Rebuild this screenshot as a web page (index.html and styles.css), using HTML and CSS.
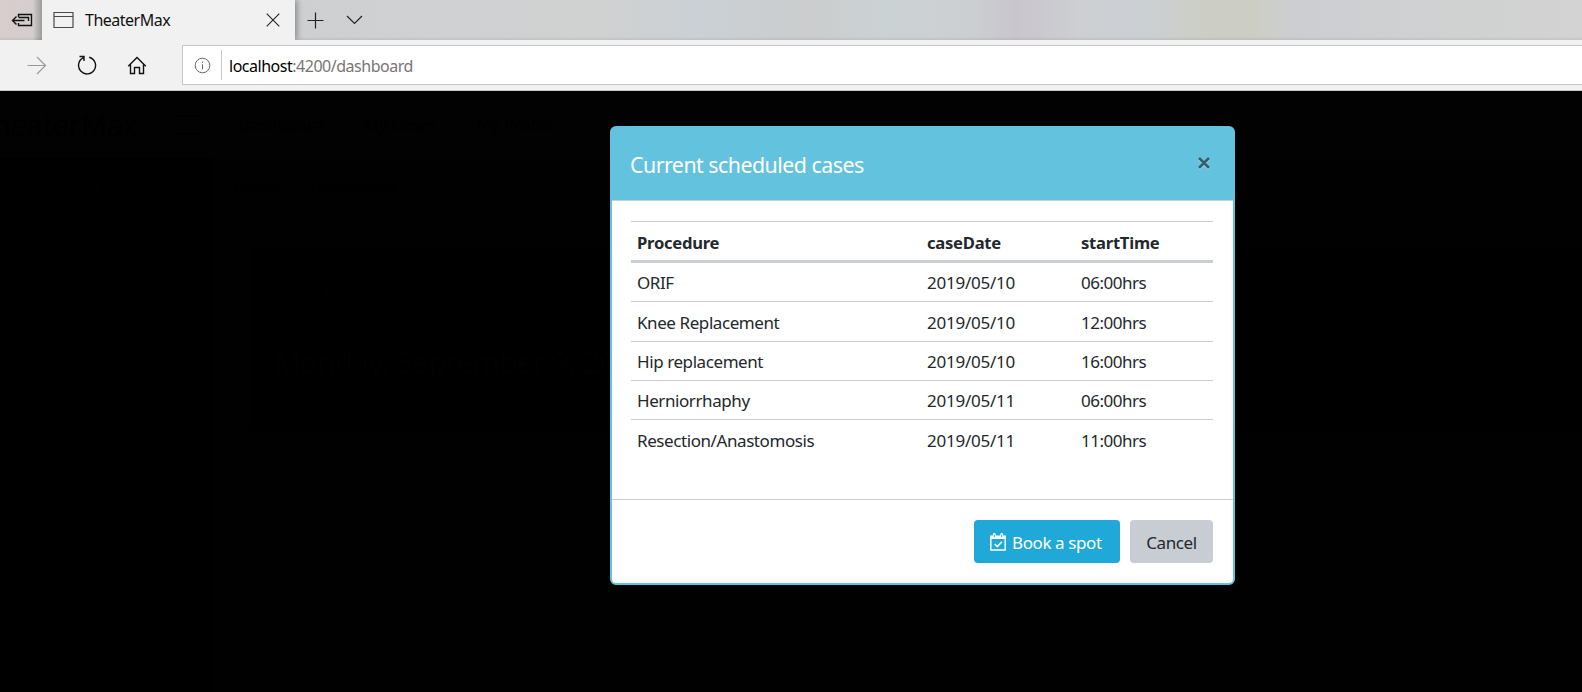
FILE: index.html
```html
<!DOCTYPE html>
<html lang="en">
<head>
<meta charset="utf-8">
<title>TheaterMax</title>
<link rel="stylesheet" href="styles.css">
</head>
<body>
<div class="browser">
  <div class="tabstrip">
    <div class="set-aside">
      <svg width="22" height="16" viewBox="0 0 22 16" fill="none" stroke="#111" stroke-width="1.400"><path d="M7.500 5V2.500h13v11h-13V11M7.500 5.500h10V9M1.500 8.500h12M5.500 4.500l-4 4 4 4"/></svg>
    </div>
    <div class="tab">
      <svg class="page-icon" width="21" height="18" viewBox="0 0 21 18" fill="none" stroke="#4a4a4a" stroke-width="1.200"><path d="M1 1.500h19v15H1zM1 5.500h19"/></svg>
      <span class="tab-title">TheaterMax</span>
      <svg width="14" height="14" viewBox="0 0 14 14" fill="none" stroke="#222" stroke-width="1.100"><path d="M.7.700l12.600 12.600M13.300.7L.7 13.300"/></svg>
    </div>
    <svg class="plus" width="17" height="17" viewBox="0 0 17 17" fill="none" stroke="#222" stroke-width="1.200"><path d="M8.500.5v16M.5 8.500h16"/></svg>
    <svg class="chevron" width="17" height="10" viewBox="0 0 17 10" fill="none" stroke="#222" stroke-width="1.200"><path d="M1 1l7.500 7.500L16 1"/></svg>
  </div>
  <div class="toolbar">
    <svg class="forward" width="20" height="19" viewBox="0 0 20 19" fill="none" stroke="#999" stroke-width="1.200"><path d="M.5 9.500h18M10 1l8.500 8.500L10 18"/></svg>
    <svg class="reload" width="20" height="20" viewBox="0 0 20 20" fill="none" stroke="#111" stroke-width="1.400"><path d="M12.200 2.200a8.500 8.500 0 1 1-5.700.5M2.500 1.500h4.500v4.500"/></svg>
    <svg class="home" width="20" height="19" viewBox="0 0 20 19" fill="none" stroke="#111" stroke-width="1.400"><path d="M1.200 10.300L10 1.500l8.800 8.800M3.500 8.500v9h4v-6h5v6h4v-9"/></svg>
    <div class="address">
      <svg width="17" height="17" viewBox="0 0 17 17" fill="none" stroke="#666" stroke-width="1"><circle cx="8.500" cy="8.500" r="7.300"/><path d="M8.500 7.300v5M8.500 4.600v1.300"/></svg>
      <div class="url"><span class="host">localhost</span>:4200/dashboard</div>
    </div>
  </div>
</div>

<div class="app">
  <div class="app-header">
    <div class="brand">TheaterMax</div>
    <div class="burger"></div>
    <div class="top-link">Dashboard</div>
    <div class="top-link">My Cases</div>
    <div class="top-link">My Profile</div>
  </div>
  <div class="app-body">
    <div class="sidebar">
      <div>Dashboard</div>
      <div class="menu-label">MAIN MENU</div>
      <div>Cases</div>
      <div>My Stats</div>
      <div>Providers</div>
      <div>My Patients</div>
    </div>
    <div class="main">
      <div class="crumbs"><span>Home</span><span>/</span><span>Dashboard</span></div>
      <div class="card">
        <div class="card-title">Calendar</div>
        <div class="date">Monday, September 9, 2019</div>
      </div>
    </div>
  </div>
</div>

<div class="modal">
  <div class="modal-header">
    <div class="modal-title">Current scheduled cases</div>
    <div class="close">
      <svg width="14" height="14" viewBox="0 0 14 14" fill="none"><path d="M2 3l10 10M12 3L2 13" stroke="#b4e1ef" stroke-width="2.600"/><path d="M2 2l10 10M12 2L2 12" stroke="#345f70" stroke-width="2.600"/></svg>
    </div>
  </div>
  <div class="modal-body">
    <table class="cases">
      <colgroup><col class="c-proc"><col class="c-date"><col class="c-time"></colgroup>
      <thead><tr><th>Procedure</th><th>caseDate</th><th>startTime</th></tr></thead>
      <tbody>
        <tr><td>ORIF</td><td>2019/05/10</td><td>06:00hrs</td></tr>
        <tr class="tall"><td>Knee Replacement</td><td>2019/05/10</td><td>12:00hrs</td></tr>
        <tr><td>Hip replacement</td><td>2019/05/10</td><td>16:00hrs</td></tr>
        <tr><td>Herniorrhaphy</td><td>2019/05/11</td><td>06:00hrs</td></tr>
        <tr><td>Resection/Anastomosis</td><td>2019/05/11</td><td>11:00hrs</td></tr>
      </tbody>
    </table>
  </div>
  <div class="modal-footer">
    <div class="btn primary">
      <svg width="16" height="18" viewBox="0 0 16 18" fill="none" stroke="#fff"><path d="M.8 3.200h14.400v13.900H.8z" stroke-width="1.500"/><path d="M.8 3h14.400v3H.8z" fill="#fff" stroke="none"/><path d="M4.300 1.500v2.700M11.700 1.500v2.700" stroke-width="2.800" stroke-linecap="round"/><path d="M4.300 1.500v2.700M11.700 1.500v2.700" stroke="#20a8d8" stroke-width="1"/><path d="M4.700 11l2.600 2.600 4.700-4.800" stroke-width="1.600"/></svg>
      <span>Book a spot</span>
    </div>
    <div class="btn secondary"><span>Cancel</span></div>
  </div>
</div>
</body>
</html>
```

FILE: styles.css
```css
* { box-sizing: border-box; }

body {
  margin: 0;
  width: 1582px;
  height: 692px;
  overflow: hidden;
  background: #000;
  font-family: "Noto Sans", "Open Sans", sans-serif;
  font-size: 17px;
  letter-spacing: -.25px;
  color: #23282c;
  display: flex;
  flex-direction: column;
  position: relative;
}

svg { display: block; flex: none; }

/* Browser chrome */
.browser { flex: none; height: 91px; background: #f1f1f1; border-bottom: 1px solid #c4cac6; }

.tabstrip {
  height: 40px;
  display: flex;
  align-items: center;
  background:
    linear-gradient(to bottom, rgba(0,0,0,0) 92%, rgba(0,0,0,.08)),
    linear-gradient(to right, #d9cccc 0, #d3cfcf 42px, #cecfd0 294px, #cfd1d2 440px, #d0d1d1 600px, #cad0d5 700px, #cbcdce 810px, #cbd2d4 880px, #cccfd1 970px, #c9c5cd 1015px, #cdcfd2 1080px, #cbd0d4 1140px, #cccec7 1195px, #cccec4 1250px, #cdced2 1300px, #d0d1d1 1450px, #d3d3d3 1582px);
}

.set-aside {
  width: 42px;
  height: 40px;
  padding: 12px 0 0 11px;
  background: linear-gradient(to right, rgba(0,0,0,0) 78%, rgba(0,0,0,.25));
}

.tab {
  width: 253px;
  height: 40px;
  padding: 0 15px 0 11px;
  display: flex;
  align-items: center;
  background: #f1f1f1;
  color: #111;
  font-size: 16px;
  box-shadow: 2px 0 6px rgba(0,0,0,.35);
  clip-path: inset(0 -8px 0 0);
}
.tab-title { flex: 1; margin-left: 11px; letter-spacing: -.5px; }
.plus { margin: 1px 0 0 12px; }
.chevron { margin-left: 22px; }

.toolbar { height: 50px; display: flex; align-items: center; }
.forward { margin-left: 27px; }
.reload { margin-left: 30px; }
.home { margin: 1px 0 0 30px; }

.address {
  margin-left: 35px;
  flex: 1;
  height: 40px;
  padding-left: 11px;
  display: flex;
  align-items: center;
  background: #fff;
  border: 1px solid #c6c6c6;
  border-right: 0;
}
.url {
  margin-left: 10px;
  height: 30px;
  padding-left: 7px;
  border-left: 1px solid #c6c6c6;
  line-height: 32px;
  font-size: 16px;
  letter-spacing: -.48px;
  color: #767676;
}
.host { color: #000; }

/* Dashboard under the modal backdrop */
.app { flex: 1; min-height: 0; background: #010101; color: #000; display: flex; flex-direction: column; white-space: nowrap; }
.app-header { height: 67px; display: flex; align-items: center; background: #020202; }
.brand { width: 138px; display: flex; justify-content: flex-end; font-size: 29px; margin-right: 37px; }
.burger { width: 26px; height: 20px; border-top: 2px solid #000; border-bottom: 2px solid #000; margin-right: 37px; }
.top-link { margin-right: 40px; }
.app-body { flex: 1; min-height: 0; display: flex; }
.sidebar { width: 212px; padding: 3px 14px; background: #000; color: #020202; line-height: 56px; }
.menu-label { font-size: 13px; line-height: 52px; margin-left: -14px; }
.main { flex: 1; padding: 19px 0 0 38px; }
.crumbs { display: flex; gap: 12px; margin-left: -17px; height: 71px; }
.card { height: 182px; padding: 26px 24px; background: #000; color: #020202; }
.card-title { font-size: 21px; line-height: 30px; }
.date { margin-top: 38px; font-size: 29px; line-height: 40px; }

/* Modal */
.modal {
  position: absolute;
  left: 610px;
  top: 126px;
  width: 625px;
  height: 459px;
  border: 2px solid #64c1de;
  border-radius: 6px;
  background: #fff;
  display: flex;
  flex-direction: column;
}
.modal-header {
  height: 73px;
  flex: none;
  padding: 0 22px 0 18px;
  display: flex;
  justify-content: space-between;
  background: #63c2de;
  border-bottom: 1px solid #c8ced3;
}
.modal-title { color: #fff; font-size: 21.4px; letter-spacing: -.53px; line-height: 74px; }
.close { padding-top: 28px; }
.modal-body { height: 298px; flex: none; padding: 20px 20px 0 19px; }

.cases { width: 582px; table-layout: fixed; border-collapse: separate; border-spacing: 0; }
.c-proc { width: 290px; }
.c-date { width: 154px; }
.c-time { width: 138px; }
.cases th, .cases td { padding: 2px 6px 0; text-align: left; line-height: 24px; }
.cases th { height: 42px; padding-top: 4px; font-size: 16.6px; border-top: 1px solid #c8ced3; border-bottom: 3px solid #c8ced3; }
.cases td { height: 39px; border-bottom: 1px solid #c8ced3; }
.cases td:first-child { letter-spacing: -.42px; }
.cases td:last-child { letter-spacing: -.5px; }
.cases .tall td { height: 40px; }
.cases tr:last-child td { border-bottom: 0; }

.modal-footer {
  flex: 1;
  border-top: 1px solid #c8ced3;
  padding: 20px 20px 0 0;
  display: flex;
  justify-content: flex-end;
  gap: 10px;
}
.btn { height: 43px; border-radius: 4px; display: flex; align-items: center; line-height: 43px; letter-spacing: -.4px; white-space: nowrap; }
.primary { width: 146px; padding-left: 16px; gap: 6px; background: #20a8d8; color: #fff; }
.secondary { width: 83px; justify-content: center; background: #c8ccd3; }
.btn span { padding-top: 2px; }
```
